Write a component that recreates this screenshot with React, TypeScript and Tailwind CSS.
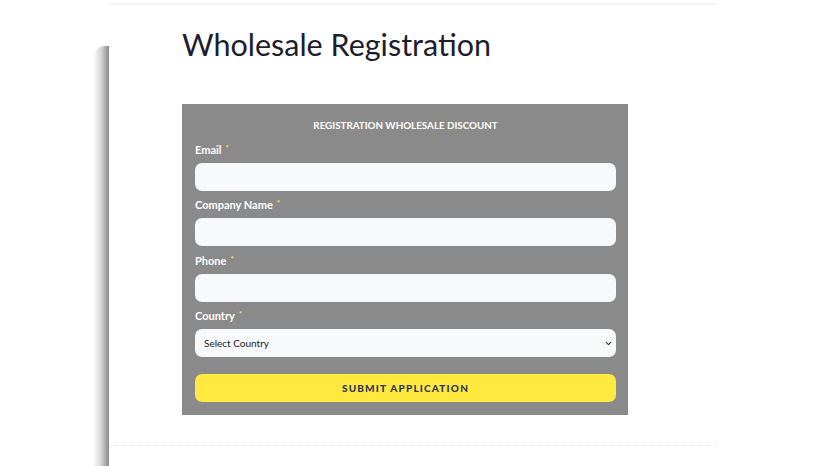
import React from 'react'
import { ChevronDown } from 'lucide-react'

const fields = [
  { label: 'Email', type: 'email' },
  { label: 'Company Name', type: 'text' },
  { label: 'Phone', type: 'tel' },
]

function Label({ text }: { text: string }) {
  return (
    <div className="h-[14px] mb-[6.5px] flex items-center text-[11px] font-bold text-white leading-none">
      {text}
      <span className="ml-[4px] text-[8px] text-[#efe06a] -mt-[3px]">*</span>
    </div>
  )
}

export default function App() {
  return (
    <div className="w-[828px] h-[466px] bg-white overflow-hidden flex" style={{ fontFamily: 'Lato, "Open Sans", sans-serif' }}>
      <div className="w-[93px] shrink-0" />
      {/* shadow edge of the page panel */}
      <div className="w-[16px] shrink-0 mt-[46px] rounded-tl-[12px] bg-gradient-to-r from-white via-[#d6d6d6] to-[#8a8a8a]" />

      <div className="w-[609px] shrink-0 flex flex-col">
        <div className="h-[2px] mt-[3px] bg-[#f4f4f4]" />

        <div className="pl-[73px]">
          <h1 className="mt-[19px] h-[40px] text-[30.5px] leading-[40px] text-[#1c1d2e] font-normal">
            Wholesale Registration
          </h1>

          <form className="mt-[40px] w-[446px] bg-[#8a8a8a] pt-[14px] pl-[13px] pr-[12px] pb-[13px]">
            <div className="h-[14px] mb-[10px] text-center text-[9.8px] font-bold text-white leading-[14px]">
              REGISTRATION WHOLESALE DISCOUNT
            </div>

            {fields.map((f) => (
              <div key={f.label}>
                <Label text={f.label} />
                <input
                  type={f.type}
                  className="block w-full h-[28px] mb-[7px] rounded-[7px] bg-[#f8f9fb] outline-none px-[10px] text-[11px]"
                />
              </div>
            ))}

            <Label text="Country" />
            <div className="relative mb-[17px]">
              <select className="block w-full h-[28px] rounded-[7px] bg-[#f8f9fb] appearance-none outline-none pl-[9px] text-[10px] text-[#222]">
                <option>Select Country</option>
              </select>
              <ChevronDown size={9} strokeWidth={3} className="absolute right-[3px] top-[10px] text-[#333]" />
            </div>

            <button
              type="button"
              className="block w-full h-[28px] rounded-[7px] bg-[#ffe93f] text-[#2e3658] text-[10px] font-black tracking-[1.2px] leading-none"
            >
              SUBMIT APPLICATION
            </button>
          </form>
        </div>

        <div className="mt-[30px] border-t border-dotted border-[#e6e6e6]" />
      </div>
    </div>
  )
}
